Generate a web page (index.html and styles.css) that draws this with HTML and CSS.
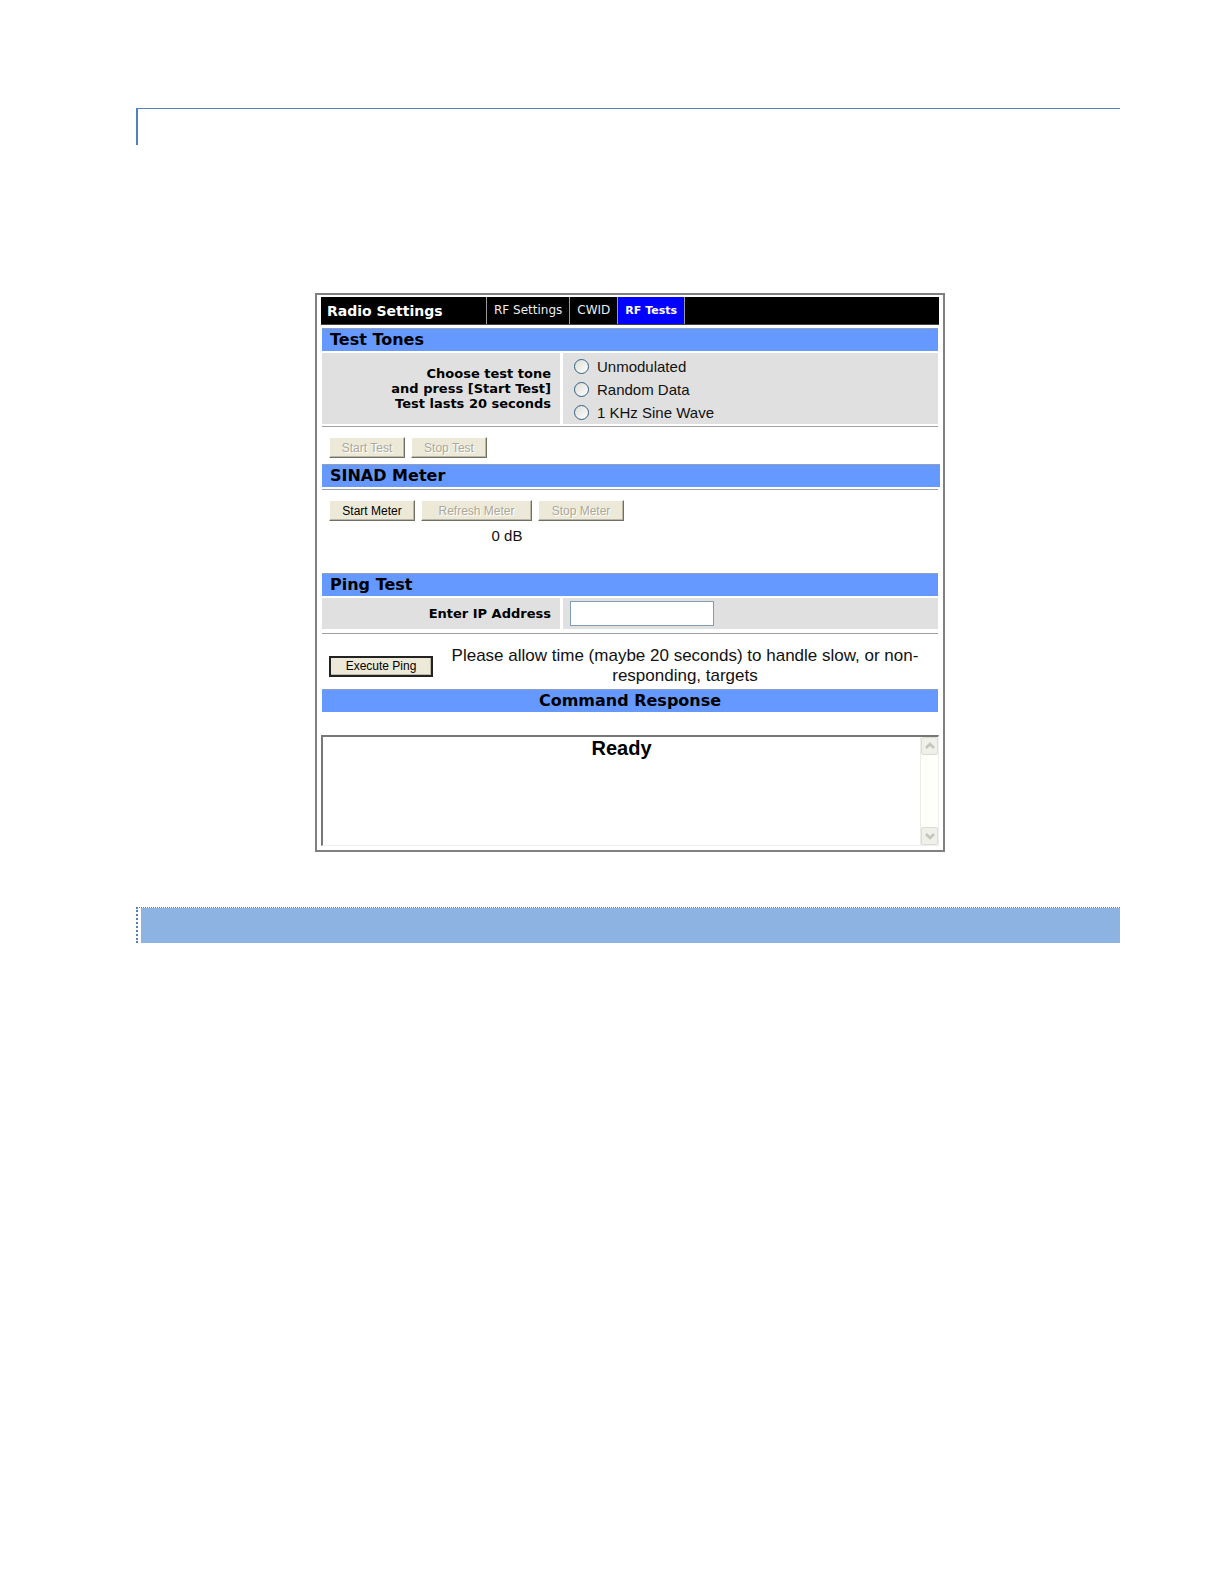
FILE: index.html
```
<!DOCTYPE html>
<html lang="en">
<head>
    <meta charset="UTF-8">
    <meta name="viewport" content="width=device-width, initial-scale=1.0">
    <title>Radio Settings - RF Tests</title>
    <link rel="stylesheet" href="styles.css">
</head>
<body>
    <div class="page">
        <div class="heading-rule"></div>

        <div class="figure">
            <main class="panel">
                <nav class="tabs">
                    <h1 class="tabs-title">Radio Settings</h1>
                    <a href="#settings" class="tab">RF Settings</a>
                    <a href="#cwid" class="tab">CWID</a>
                    <a href="#tests" class="tab active">RF Tests</a>
                </nav>

                <!-- Test tones -->
                <section class="tones">
                    <h2 class="bar">Test Tones</h2>
                    <div class="row" role="radiogroup" aria-labelledby="toneLabel">
                        <div class="cell label" id="toneLabel">Choose test tone<br>and press [Start Test]<br>Test lasts 20 seconds</div>
                        <div class="cell options">
                            <label class="option"><input type="radio" name="tone"> Unmodulated</label>
                            <label class="option"><input type="radio" name="tone"> Random Data</label>
                            <label class="option"><input type="radio" name="tone"> 1 KHz Sine Wave</label>
                        </div>
                    </div>
                    <hr>
                    <div class="buttons">
                        <button type="button" class="btn small" disabled>Start Test</button>
                        <button type="button" class="btn small" disabled>Stop Test</button>
                    </div>
                </section>

                <!-- SINAD meter -->
                <section class="sinad">
                    <h2 class="bar wide">SINAD Meter</h2>
                    <hr>
                    <div class="buttons">
                        <button type="button" class="btn">Start Meter</button>
                        <button type="button" class="btn large" disabled>Refresh Meter</button>
                        <button type="button" class="btn" disabled>Stop Meter</button>
                    </div>
                    <p class="reading">0 dB</p>
                </section>

                <!-- Ping -->
                <section class="ping">
                    <h2 class="bar">Ping Test</h2>
                    <div class="row">
                        <label class="cell label" for="ip">Enter IP Address</label>
                        <div class="cell field"><input type="text" id="ip" class="ip"></div>
                    </div>
                    <hr>
                    <div class="execute">
                        <button type="button" class="btn default">Execute Ping</button>
                        <p class="note">Please allow time (maybe 20 seconds) to handle slow, or non-responding, targets</p>
                    </div>
                    <h2 class="bar center">Command Response</h2>
                </section>

                <div class="response">
                    <div class="response-text">Ready</div>
                    <div class="scrollbar">
                        <button type="button" class="scroll-btn" aria-label="Scroll up" disabled>
                            <svg width="12" height="10" viewBox="0 0 12 10"><path d="M2 7l4-4 4 4" fill="none" stroke="#c4c4bc" stroke-width="2.5"/></svg>
                        </button>
                        <button type="button" class="scroll-btn" aria-label="Scroll down" disabled>
                            <svg width="12" height="10" viewBox="0 0 12 10"><path d="M2 3l4 4 4-4" fill="none" stroke="#c4c4bc" stroke-width="2.5"/></svg>
                        </button>
                    </div>
                </div>
            </main>
        </div>

        <div class="heading-band"><div class="band-fill"></div></div>
    </div>
</body>
</html>
```
FILE: styles.css
```
* {
    box-sizing: border-box;
}

body {
    margin: 0;
    background-color: #fff;
    color: #111;
    font-family: "Liberation Sans", Arial, sans-serif;
    font-size: 15px;
}

h1, h2, p {
    margin: 0;
}

.page {
    padding: 108px 104px 0 136px;
}

.heading-rule {
    height: 37px;
    margin-bottom: 148px;
    border-top: 1px solid #4f81bd;
    border-left: 2px solid #4f81bd;
}

.figure {
    padding-left: 4px;
}

.panel {
    max-width: 630px;
    margin: 0 auto;
    padding: 2px 4px 4px;
    border: 2px solid #808080;
}

/* Top tabs */
.tabs {
    display: flex;
    height: 28px;
    background-color: #000;
    border-bottom: 1px solid #444;
    font-family: "DejaVu Sans", Verdana, sans-serif;
}

.tabs-title {
    width: 166px;
    padding-left: 6px;
    border-right: 1px solid #999;
    color: #fff;
    font-size: 14px;
    line-height: 28px;
}

.tab {
    padding: 0 7px;
    border-right: 1px solid #999;
    color: #eee;
    font-size: 12px;
    line-height: 27px;
    text-decoration: none;
}

.tab.active {
    background-color: #0000ff;
    color: #fff;
    font-size: 11px;
    font-weight: bold;
}

/* Sections */
section {
    padding: 0 1px;
}

.tones {
    padding-top: 3px;
}

.bar {
    height: 23px;
    padding-left: 8px;
    background-color: #6699ff;
    border-top: 1px solid #8f9fc0;
    color: #000;
    font-family: "DejaVu Sans", Verdana, sans-serif;
    font-size: 16px;
    line-height: 22px;
}

.bar.wide {
    margin-right: -2px;
}

.bar.center {
    padding-left: 0;
    text-align: center;
}

.row {
    display: grid;
    grid-template-columns: 238px 1fr;
    gap: 3px;
    margin: 2px 0;
}

.cell {
    background-color: #e0e0e0;
}

.label {
    display: flex;
    align-items: center;
    justify-content: flex-end;
    padding-right: 9px;
    color: #000;
    font-family: "DejaVu Sans", Verdana, sans-serif;
    font-size: 13px;
    font-weight: bold;
    line-height: 15px;
    text-align: right;
}

.options {
    padding: 2px 0 0 11px;
}

.option {
    display: flex;
    align-items: center;
    gap: 8px;
    height: 23px;
}

.option input {
    appearance: none;
    width: 15px;
    height: 15px;
    margin: 0;
    border: 1px solid #33607f;
    border-radius: 50%;
    background: linear-gradient(135deg, #dcdcd8, #fff);
}

hr {
    height: 1px;
    margin: 2px 0 0;
    border: 0;
    background-color: #a0a0a0;
}

/* Buttons */
.buttons {
    display: flex;
    gap: 6px;
    padding: 10px 7px 6px;
}

.btn {
    width: 86px;
    height: 21px;
    padding: 0;
    background-color: #ece9d8;
    border: 1px solid;
    border-color: #fff #716f64 #716f64 #fff;
    box-shadow: inset -1px -1px #bbb8a8;
    color: #000;
    font-family: "Liberation Sans", Arial, sans-serif;
    font-size: 12px;
}

.btn.small {
    width: 76px;
}

.btn.large {
    width: 111px;
}

.btn.default {
    width: 104px;
    flex-shrink: 0;
    border: 2px solid #222;
}

.btn:disabled {
    color: #aca899;
    text-shadow: 1px 1px #fff;
}

.reading {
    width: 370px;
    height: 46px;
    line-height: 18px;
    text-align: center;
}

/* Ping */
.ping hr {
    margin-top: 4px;
}

.field {
    padding: 3px 7px;
}

.ip {
    display: block;
    width: 144px;
    height: 25px;
    border: 1px solid #7f9db9;
    background-color: #fff;
}

.execute {
    display: flex;
    align-items: center;
    gap: 6px;
    padding: 12px 7px 3px;
}

.note {
    flex: 1;
    font-size: 17px;
    line-height: 20px;
    text-align: center;
}

/* Response */
.response {
    display: flex;
    height: 111px;
    margin-top: 23px;
    border: 1px solid;
    border-color: #777 #eee #eee #777;
    border-top-width: 2px;
    border-left-width: 2px;
}

.response-text {
    flex: 1;
    color: #000;
    font-size: 20px;
    font-weight: bold;
    line-height: 22px;
    text-align: center;
}

.scrollbar {
    display: flex;
    flex-direction: column;
    justify-content: space-between;
    width: 18px;
    border-left: 1px solid #eeede5;
    background-color: #fefefb;
}

.scroll-btn {
    display: flex;
    align-items: center;
    justify-content: center;
    height: 18px;
    padding: 0;
    border: 1px solid #dddcd4;
    border-radius: 2px;
    background-color: #f0f0ea;
}

/* Lower heading */
.heading-band {
    margin-top: 55px;
    padding-left: 3px;
    border-top: 1px dotted #4f81bd;
    border-left: 2px dotted #4f81bd;
}

.band-fill {
    height: 35px;
    background-color: #8db3e2;
}
```
